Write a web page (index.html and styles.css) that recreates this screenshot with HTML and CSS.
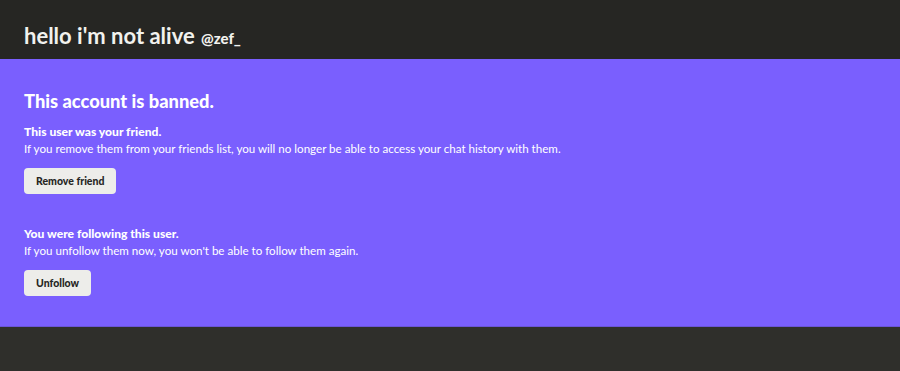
FILE: index.html
```html
<!DOCTYPE html>
<html>
<head>
<meta charset="utf-8">
<link rel="stylesheet" href="styles.css">
</head>
<body>
<header class="header">
  <h1 class="title">hello i'm not alive <span class="handle">@zef_</span></h1>
</header>
<main class="banner">
  <h2 class="banner-title">This account is banned.</h2>
  <section class="block">
    <p class="block-head">This user was your friend.</p>
    <p class="block-text">If you remove them from your friends list, you will no longer be able to access your chat history with them.</p>
    <button class="btn">Remove friend</button>
  </section>
  <section class="block">
    <p class="block-head">You were following this user.</p>
    <p class="block-text">If you unfollow them now, you won't be able to follow them again.</p>
    <button class="btn">Unfollow</button>
  </section>
</main>
<footer class="footer"></footer>
</body>
</html>
```

FILE: styles.css
```css
html, body { margin: 0; padding: 0; }
body {
  background: #2f2f2b;
  font-family: Lato, "Noto Sans", sans-serif;
  color: #fff;
  width: 900px;
  height: 371px;
  overflow: hidden;
}
.header {
  background: #262623;
  height: 59px;
  box-sizing: border-box;
  padding: 23px 24px 0;
}
.title {
  margin: 0;
  font-family: Lato, sans-serif;
  font-weight: 700;
  font-size: 22px;
  line-height: 26px;
  color: #f2f2ee;
}
.handle {
  font-size: 15px;
  font-weight: 900;
  margin-left: 1px;
}
.banner {
  background: #7a5ffe;
  height: 268px;
  box-sizing: border-box;
  padding: 31px 24px 0;
  border-bottom: 1px solid #6a54d8;
}
.banner-title {
  margin: 0 0 11px;
  font-family: Lato, sans-serif;
  font-weight: 900;
  font-size: 18.3px;
  line-height: 22px;
}
.block { margin-bottom: 31px; }
.block-head {
  margin: 0;
  font-weight: 900;
  font-size: 12.1px;
  line-height: 17px;
}
.block-text {
  margin: 0 0 11px;
  font-size: 11.6px;
  line-height: 17px;
}
.btn {
  display: block;
  background: #ededea;
  color: #262623;
  border: none;
  border-radius: 4px;
  font-family: Lato, sans-serif;
  font-weight: 900;
  font-size: 10.5px;
  height: 26px;
  padding: 0 12px;
}
.footer { height: 44px; }
```
